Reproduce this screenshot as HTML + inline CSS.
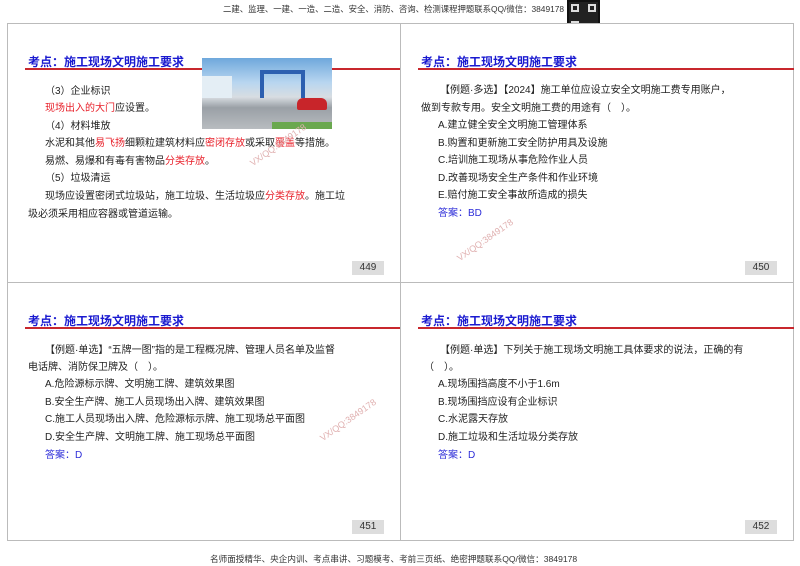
<!DOCTYPE html>
<html><head><meta charset="utf-8"><style>
*{margin:0;padding:0;box-sizing:border-box}
body{width:800px;height:566px;background:#fff;position:relative;overflow:hidden;font-family:"Liberation Sans","Noto Sans CJK SC",sans-serif;color:#222}
.hdr{position:absolute;top:3px;left:223px;font-size:8.4px;color:#333;white-space:nowrap}
.ftr{position:absolute;top:553px;left:210px;font-size:8.6px;color:#333;white-space:nowrap}
.qr{position:absolute;left:567px;top:0;width:33px;height:33px;background:#222;border:2px solid #111}
.qr i{position:absolute;width:8px;height:8px;border:2px solid #ddd}
.p{position:absolute;border:1px solid #bbb;background:#fff}
.t{position:absolute;font-size:12px;font-weight:bold;color:#1a1ad0;white-space:nowrap}
.ln{position:absolute;height:2px;background:#c8272d}
.x{position:absolute;font-size:10px;white-space:nowrap;color:#222}
.r{color:#e8202a}
.b{color:#2b2bd8}
.n{position:absolute;width:32px;height:14px;background:#ddd;font-size:10px;text-align:center;line-height:14px;color:#333}
.wm{position:absolute;font-size:9px;color:#e0b0b0;transform:rotate(-35deg);white-space:nowrap}
</style></head><body>
<div class="hdr">二建、监理、一建、一造、二造、安全、消防、咨询、检测课程押题联系QQ/微信：3849178</div>
<div class="qr"><i style="left:2px;top:2px"></i><i style="right:2px;top:2px"></i><i style="left:2px;bottom:2px"></i></div>

<div class="p" style="left:7px;top:23px;width:394px;height:260px"></div>
<div class="p" style="left:400px;top:23px;width:394px;height:260px"></div>
<div class="p" style="left:7px;top:282px;width:394px;height:259px"></div>
<div class="p" style="left:400px;top:282px;width:394px;height:259px"></div>

<!-- panel 1 -->
<div class="t" style="left:28px;top:53px">考点：施工现场文明施工要求</div>
<div class="ln" style="left:25px;top:68px;width:375px"></div>
<div style="position:absolute;left:202px;top:58px;width:130px;height:71px;background:linear-gradient(#6fa8dc 0,#b9d6f0 35%,#d8dde2 55%,#9aa0a6 70%,#b8bcc0 100%)">
<div style="position:absolute;left:58px;top:12px;width:45px;height:28px;border:4px solid #2c5fb0;border-bottom:none"></div>
<div style="position:absolute;left:0;top:18px;width:30px;height:22px;background:#e4eef5"></div>
<div style="position:absolute;left:95px;top:40px;width:30px;height:12px;background:#c8252a;border-radius:6px 6px 2px 2px"></div>
<div style="position:absolute;left:70px;top:64px;width:60px;height:7px;background:#6aa84f"></div>
</div>
<div class="x" style="left:45px;top:82px">（3）企业标识</div>
<div class="x" style="left:45px;top:99px"><span class="r">现场出入的大门</span>应设置。</div>
<div class="x" style="left:45px;top:117px">（4）材料堆放</div>
<div class="x" style="left:45px;top:134px">水泥和其他<span class="r">易飞扬</span>细颗粒建筑材料应<span class="r">密闭存放</span>或采取<span class="r">覆盖</span>等措施。</div>
<div class="x" style="left:45px;top:152px">易燃、易爆和有毒有害物品<span class="r">分类存放</span>。</div>
<div class="x" style="left:45px;top:169px">（5）垃圾清运</div>
<div class="x" style="left:45px;top:187px">现场应设置密闭式垃圾站，施工垃圾、生活垃圾应<span class="r">分类存放</span>。施工垃</div>
<div class="x" style="left:28px;top:205px">圾必须采用相应容器或管道运输。</div>
<div class="n" style="left:352px;top:261px">449</div>
<div class="wm" style="left:245px;top:140px">VX/QQ:3849178</div>

<!-- panel 2 -->
<div class="t" style="left:421px;top:53px">考点：施工现场文明施工要求</div>
<div class="ln" style="left:418px;top:68px;width:376px"></div>
<div class="x" style="left:440px;top:81px">【例题·多选】【2024】施工单位应设立安全文明施工费专用账户，</div>
<div class="x" style="left:421px;top:99px">做到专款专用。安全文明施工费的用途有（　）。</div>
<div class="x" style="left:438px;top:116px">A.建立健全安全文明施工管理体系</div>
<div class="x" style="left:438px;top:134px">B.购置和更新施工安全防护用具及设施</div>
<div class="x" style="left:438px;top:151px">C.培训施工现场从事危险作业人员</div>
<div class="x" style="left:438px;top:169px">D.改善现场安全生产条件和作业环境</div>
<div class="x" style="left:438px;top:186px">E.赔付施工安全事故所造成的损失</div>
<div class="x b" style="left:438px;top:204px">答案：BD</div>
<div class="n" style="left:745px;top:261px">450</div>
<div class="wm" style="left:452px;top:235px">VX/QQ:3849178</div>

<!-- panel 3 -->
<div class="t" style="left:28px;top:312px">考点：施工现场文明施工要求</div>
<div class="ln" style="left:25px;top:327px;width:375px"></div>
<div class="x" style="left:45px;top:341px">【例题·单选】“五牌一图”指的是工程概况牌、管理人员名单及监督</div>
<div class="x" style="left:28px;top:358px">电话牌、消防保卫牌及（　）。</div>
<div class="x" style="left:45px;top:375px">A.危险源标示牌、文明施工牌、建筑效果图</div>
<div class="x" style="left:45px;top:393px">B.安全生产牌、施工人员现场出入牌、建筑效果图</div>
<div class="x" style="left:45px;top:410px">C.施工人员现场出入牌、危险源标示牌、施工现场总平面图</div>
<div class="x" style="left:45px;top:428px">D.安全生产牌、文明施工牌、施工现场总平面图</div>
<div class="x b" style="left:45px;top:446px">答案：D</div>
<div class="n" style="left:352px;top:520px">451</div>
<div class="wm" style="left:315px;top:415px">VX/QQ:3849178</div>

<!-- panel 4 -->
<div class="t" style="left:421px;top:312px">考点：施工现场文明施工要求</div>
<div class="ln" style="left:418px;top:327px;width:376px"></div>
<div class="x" style="left:440px;top:341px">【例题·单选】下列关于施工现场文明施工具体要求的说法，正确的有</div>
<div class="x" style="left:424px;top:358px">（　）。</div>
<div class="x" style="left:438px;top:375px">A.现场围挡高度不小于1.6m</div>
<div class="x" style="left:438px;top:393px">B.现场围挡应设有企业标识</div>
<div class="x" style="left:438px;top:410px">C.水泥露天存放</div>
<div class="x" style="left:438px;top:428px">D.施工垃圾和生活垃圾分类存放</div>
<div class="x b" style="left:438px;top:446px">答案：D</div>
<div class="n" style="left:745px;top:520px">452</div>

<div class="ftr">名师面授精华、央企内训、考点串讲、习题模考、考前三页纸、绝密押题联系QQ/微信：3849178</div>
</body></html>
